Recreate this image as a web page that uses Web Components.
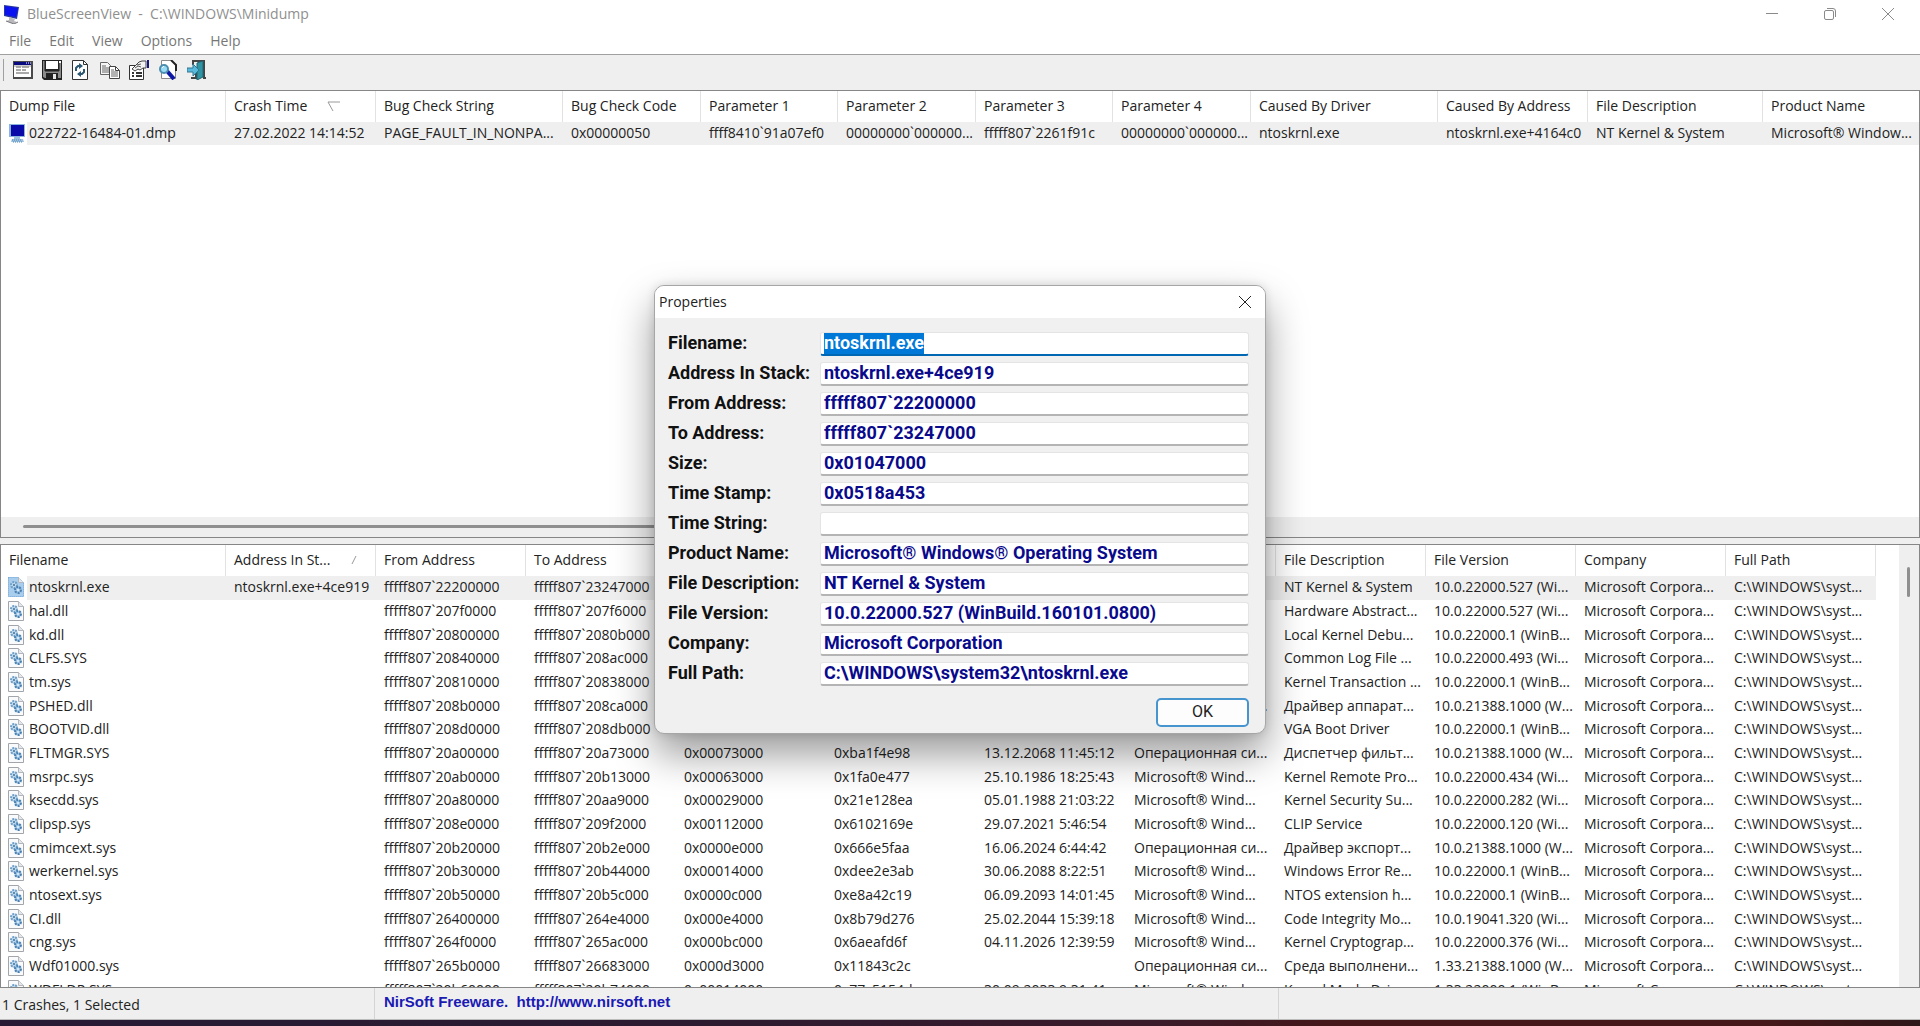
<!DOCTYPE html>
<html lang="en">
<head>
<meta charset="utf-8">
<title>BlueScreenView</title>
<style>
  body {
    margin: 0;
    font: 14px/20px "Open Sans", "Noto Sans", sans-serif;
    color: #222;
  }
</style>
</head>
<body>
<app-window></app-window>

<script>
const icons = {
  monitor: `<svg width="18" height="20" viewBox="0 0 18 20">
    <rect x="1" y="1" width="16" height="13" fill="#8ab4dc"/>
    <rect x="3" y="2" width="13" height="11" fill="#0a0aa8"/>
    <path d="M6 14h6v2h3l1 3H3l1-3h2z" fill="#9cc0de"/>
    <path d="M4 17h10M5 19h9" stroke="#4d86b8" stroke-dasharray="1 1"/>
  </svg>`,
  app: `<svg width="18" height="20" viewBox="0 0 18 20">
    <path d="M1 1l15 2-2 12-13-3z" fill="#2a3a9c"/>
    <path d="M2 2l13 2-2 9-11-2z" fill="#0b12f0"/>
    <path d="M6 13l6 2-1 2 3 1-3 2-8-3 3-1z" fill="#b9b9bd"/>
    <path d="M3 17l8 3 4-2" fill="none" stroke="#77777b"/>
  </svg>`,
  file: `<svg width="18" height="20" viewBox="0 0 18 20">
    <path d="M.5 .5h10l5 5v14H.5z" fill="#f8fafc" stroke="#a2a6ab"/>
    <path d="M10.500 .5v5h5" fill="#e4e8ec" stroke="#b4b8bc"/>
    <circle cx="6" cy="8" r="3" fill="#c2dcf0" stroke="#6f9ec6" stroke-width="2" stroke-dasharray="2 1"/>
    <circle cx="10" cy="13" r="3" fill="#9cc4e6" stroke="#4a80b0" stroke-width="2" stroke-dasharray="2 1"/>
    <circle cx="6" cy="8" r="1" fill="#3f709c"/>
    <circle cx="10" cy="13" r="1" fill="#e8f3fb"/>
  </svg>`,
  list: `<svg width="20" height="20" viewBox="0 0 20 20">
    <path d="M0 1h20v18H0z" fill="#4a4a4a"/><path d="M1 2h17v15H1z" fill="#fff"/>
    <path d="M1 2h17v3H1z" fill="#0a0a80"/><path d="M13 3h1m1 0h1m1 0h1" stroke="#fff"/>
    <path d="M3 7h5m1 0h7M3 10h5m1 0h4M3 13h13" stroke="#555"/>
    <path d="M1 6h17" stroke="#9a9a9a"/>
  </svg>`,
  save: `<svg width="20" height="20" viewBox="0 0 20 20">
    <path d="M0 0h20v20H2l-2-2z" fill="#222"/>
    <path d="M1 1h2v10h14V1h2v17H3l-2-1z" fill="#8c8c8c"/>
    <path d="M4 1h12v8H4z" fill="#fff"/>
    <path d="M3 1v10h14V1" fill="none" stroke="#222"/>
    <path d="M4 13h12v6H4z" fill="#222"/><path d="M11 14h3v5h-3z" fill="#e6e6e6"/>
    <path d="M17 1h2v2h-2z" fill="#fff"/>
  </svg>`,
  refresh: `<svg width="20" height="20" viewBox="0 0 20 20">
    <path d="M1.500 .5h11l4 4v15h-15z" fill="#fff" stroke="#333"/>
    <path d="M12.500 .5v4h4" fill="none" stroke="#333"/>
    <path d="M5 11V8l2-2h2M13 9v3l-2 2H9" fill="none" stroke="#2c5871" stroke-width="2"/>
    <path d="M8 3l4 3-4 3zM10 11l-4 3 4 3z" fill="#2c5871"/>
  </svg>`,
  copy: `<svg width="20" height="20" viewBox="0 0 20 20">
    <path d="M.5 2.500h7l3 3v9H.5z" fill="#f5f5f5" stroke="#666"/>
    <path d="M2 6h4M2 8h7M2 10h7M2 12h7" stroke="#666"/>
    <path d="M9.500 6.500h6l4 4v8h-10z" fill="#fff" stroke="#444"/>
    <path d="M15.500 6.500v4h4" fill="none" stroke="#444"/>
    <path d="M11 10h3M11 12h7M11 14h7M11 16h7" stroke="#666"/>
  </svg>`,
  properties: `<svg width="20" height="20" viewBox="0 0 20 20">
    <path d="M.5 5.500h14v14H.5z" fill="#fff" stroke="#333"/>
    <path d="M3 13h2m2 0h6M3 16h2m2 0h6" stroke="#333" stroke-width="2"/>
    <path d="M3 9l3-3 4-4 3-1h4v7h-3l-3 2-2-1-3 2z" fill="#f2f2f2" stroke="#444"/>
    <path d="M6 8l3-2 3 1M8 5l4-1" fill="none" stroke="#555"/>
    <path d="M18 0h2v8h-2z" fill="#15157c"/>
  </svg>`,
  find: `<svg width="20" height="20" viewBox="0 0 20 20">
    <path d="M3.500 .5h10l4 4v14h-14z" fill="#fff" stroke="#8a8a8a"/>
    <path d="M13 0l5 5v6" fill="none" stroke="#222" stroke-width="2"/>
    <path d="M9 11l7 8" stroke="#0c17a5" stroke-width="4"/>
    <circle cx="6" cy="9" r="4" fill="#9adcf6" stroke="#4a8dae" stroke-width="2"/>
    <path d="M4 8l2-2" stroke="#fff"/>
  </svg>`,
  exit: `<svg width="20" height="20" viewBox="0 0 20 20">
    <path d="M6 5V1h11v17h2" fill="none" stroke="#444" stroke-width="2"/>
    <path d="M4 18h5v-5" fill="none" stroke="#444" stroke-width="2"/>
    <path d="M10 3l6-2v16l-6 3z" fill="#2f95a5" stroke="#1f6472"/>
    <path d="M0 8h6V4l6 6-6 6v-4H0z" fill="#59b9dc" stroke="#2e7793"/>
  </svg>`,
  sortDown: `<svg width="14" height="12" viewBox="0 0 14 12"><path d="M13 2H1l5 9" fill="none" stroke="#999"/></svg>`,
  sortUp: `<svg width="8" height="10" viewBox="0 0 8 10"><path d="M2 9l4-8" stroke="#999"/></svg>`
};

const crashColumns = [
  ['Dump File', 225], ['Crash Time', 150, 'sortDown'], ['Bug Check String', 187],
  ['Bug Check Code', 138], ['Parameter 1', 137], ['Parameter 2', 138],
  ['Parameter 3', 137], ['Parameter 4', 138], ['Caused By Driver', 187],
  ['Caused By Address', 150], ['File Description', 175], ['Product Name']
];

const crashRows = [
  ['022722-16484-01.dmp', '27.02.2022 14:14:52', 'PAGE_FAULT_IN_NONPA...', '0x00000050',
    'ffff8410`91a07ef0', '00000000`000000...', 'fffff807`2261f91c', '00000000`000000...',
    'ntoskrnl.exe', 'ntoskrnl.exe+4164c0', 'NT Kernel & System', 'Microsoft® Window...']
];

const driverColumns = [
  ['Filename', 225], ['Address In St...', 150, 'sortUp'], ['From Address', 150],
  ['To Address', 150], ['Size', 150], ['Time Stamp', 150], ['Time String', 150],
  ['Product Name', 150], ['File Description', 150], ['File Version', 150],
  ['Company', 150], ['Full Path', 150]
];

const ms = 'Microsoft® Wind...';
const os = 'Операционная си...';
const company = 'Microsoft Corpora...';
const path = 'C:\\WINDOWS\\syst...';

const driverRows = [
  ['ntoskrnl.exe', 'ntoskrnl.exe+4ce919', '22200000', '23247000', '', '', '', '', 'NT Kernel & System', '10.0.22000.527 (Wi...'],
  ['hal.dll', '', '207f0000', '207f6000', '', '', '', '', 'Hardware Abstract...', '10.0.22000.527 (Wi...'],
  ['kd.dll', '', '20800000', '2080b000', '', '', '', '', 'Local Kernel Debu...', '10.0.22000.1 (WinB...'],
  ['CLFS.SYS', '', '20840000', '208ac000', '', '', '', '', 'Common Log File ...', '10.0.22000.493 (Wi...'],
  ['tm.sys', '', '20810000', '20838000', '', '', '', '', 'Kernel Transaction ...', '10.0.22000.1 (WinB...'],
  ['PSHED.dll', '', '208b0000', '208ca000', '', '', '', os, 'Драйвер аппарат...', '10.0.21388.1000 (W...'],
  ['BOOTVID.dll', '', '208d0000', '208db000', '0x0000b000', '0x1a8b8d18', '08.06.2088 6:38:28', ms, 'VGA Boot Driver', '10.0.22000.1 (WinB...'],
  ['FLTMGR.SYS', '', '20a00000', '20a73000', '0x00073000', '0xba1f4e98', '13.12.2068 11:45:12', os, 'Диспетчер фильт...', '10.0.21388.1000 (W...'],
  ['msrpc.sys', '', '20ab0000', '20b13000', '0x00063000', '0x1fa0e477', '25.10.1986 18:25:43', ms, 'Kernel Remote Pro...', '10.0.22000.434 (Wi...'],
  ['ksecdd.sys', '', '20a80000', '20aa9000', '0x00029000', '0x21e128ea', '05.01.1988 21:03:22', ms, 'Kernel Security Su...', '10.0.22000.282 (Wi...'],
  ['clipsp.sys', '', '208e0000', '209f2000', '0x00112000', '0x6102169e', '29.07.2021 5:46:54', ms, 'CLIP Service', '10.0.22000.120 (Wi...'],
  ['cmimcext.sys', '', '20b20000', '20b2e000', '0x0000e000', '0x666e5faa', '16.06.2024 6:44:42', os, 'Драйвер экспорт...', '10.0.21388.1000 (W...'],
  ['werkernel.sys', '', '20b30000', '20b44000', '0x00014000', '0xdee2e3ab', '30.06.2088 8:22:51', ms, 'Windows Error Re...', '10.0.22000.1 (WinB...'],
  ['ntosext.sys', '', '20b50000', '20b5c000', '0x0000c000', '0xe8a42c19', '06.09.2093 14:01:45', ms, 'NTOS extension h...', '10.0.22000.1 (WinB...'],
  ['CI.dll', '', '26400000', '264e4000', '0x000e4000', '0x8b79d276', '25.02.2044 15:39:18', ms, 'Code Integrity Mo...', '10.0.19041.320 (Wi...'],
  ['cng.sys', '', '264f0000', '265ac000', '0x000bc000', '0x6aeafd6f', '04.11.2026 12:39:59', ms, 'Kernel Cryptograp...', '10.0.22000.376 (Wi...'],
  ['Wdf01000.sys', '', '265b0000', '26683000', '0x000d3000', '0x11843c2c', '', os, 'Среда выполнени...', '1.33.21388.1000 (W...'],
  ['WDFLDR.SYS', '', '20b60000', '20b74000', '0x00014000', '0x77c5154d', '30.09.2033 9:31:41', ms, 'Kernel Mode Dri...', '1.33.22000.1 (WinB...']
].map(row => row
  .map((cell, i) => (i === 2 || i === 3 ? `fffff807\`${cell}` : cell))
  .concat(company, path));

const properties = [
  ['Filename', 'ntoskrnl.exe'],
  ['Address In Stack', 'ntoskrnl.exe+4ce919'],
  ['From Address', 'fffff807`22200000'],
  ['To Address', 'fffff807`23247000'],
  ['Size', '0x01047000'],
  ['Time Stamp', '0x0518a453'],
  ['Time String', ''],
  ['Product Name', 'Microsoft® Windows® Operating System'],
  ['File Description', 'NT Kernel & System'],
  ['File Version', '10.0.22000.527 (WinBuild.160101.0800)'],
  ['Company', 'Microsoft Corporation'],
  ['Full Path', 'C:\\WINDOWS\\system32\\ntoskrnl.exe']
];

const escapeText = text => text.replace(/&/g, '&amp;');

class TitleBar extends HTMLElement {

  constructor() {
    super();
    this.attachShadow({mode: 'open'}).innerHTML = `
      <style>
        :host {
          display: flex;
          align-items: center;
          height: 28px;
          padding-left: 3px;
          background: #fff;
          color: #8f8f8f;
        }
        h1 {
          flex: 1;
          margin: 0 0 0 6px;
          font-size: 14px;
          font-weight: normal;
          white-space: pre;
        }
        button {
          width: 58px;
          height: 28px;
          padding: 0;
          border: 0;
          background: none;
        }
        button svg {
          display: block;
          margin: auto;
          fill: none;
          stroke: #8a8a8a;
        }
        button:last-child {
          margin-right: 3px;
        }
      </style>
      ${icons.app}
      <h1><slot></slot></h1>
      <button aria-label="Minimize"><svg width="14" height="14"><path d="M1 6.500h12"/></svg></button>
      <button aria-label="Restore"><svg width="14" height="14"><path d="M3 3.500h6q1.500 0 1.500 1.500v6q0 1.500-1.500 1.500H3q-1.500 0-1.500-1.500V5q0-1.500 1.500-1.500zM4 1.500h6q2.500 0 2.500 2.500v6"/></svg></button>
      <button aria-label="Close"><svg width="14" height="14"><path d="M1 1l12 12M13 1L1 13"/></svg></button>
    `;
  }
}

class MenuBar extends HTMLElement {

  constructor() {
    super();
    this.attachShadow({mode: 'open'}).innerHTML = `
      <style>
        :host {
          display: flex;
          height: 26px;
          background: #fff;
        }
        button {
          padding: 0 9px;
          border: 0;
          background: none;
          color: #777;
          font: inherit;
        }
      </style>
      ${['File', 'Edit', 'View', 'Options', 'Help'].map(name => `<button>${name}</button>`).join('')}
    `;
  }
}

class ToolBar extends HTMLElement {

  constructor() {
    super();
    const buttons = [
      ['list', 'Advanced Options'], ['save', 'Save Selected Items'], ['refresh', 'Refresh'],
      ['copy', 'Copy Selected Items'], ['properties', 'Properties'], ['find', 'Find'], ['exit', 'Exit']
    ];
    this.attachShadow({mode: 'open'}).innerHTML = `
      <style>
        :host {
          display: flex;
          align-items: center;
          box-sizing: border-box;
          height: 36px;
          padding: 0 3px 5px;
          border-top: 1px solid #a0a0a0;
          background: #efefef;
        }
        .grip {
          width: 1px;
          height: 22px;
          margin-right: 4px;
          background: #a0a0a0;
        }
        button {
          display: grid;
          place-items: center;
          width: 29px;
          height: 24px;
          padding: 0;
          border: 0;
          background: none;
        }
      </style>
      <span class="grip"></span>
      ${buttons.map(([icon, label]) => `<button aria-label="${label}">${icons[icon]}</button>`).join('')}
    `;
  }
}

class ListPane extends HTMLElement {

  constructor() {
    super();
    this.shadowDOM = this.attachShadow({mode: 'open'});
  }

  set data(data) {
    this._data = data;
    this.render();
  }

  renderHead([name, , sort]) {
    return `<th scope="col"><span>${name}${sort ? icons[sort] : ''}</span></th>`;
  }

  renderRow(row, icon) {
    return `<tr>${row.map((cell, i) => i === 0
      ? `<td><div>${icon}<span>${cell}</span></div></td>`
      : `<td>${escapeText(cell)}</td>`).join('')}</tr>`;
  }

  render() {
    const {columns, rows, icon} = this._data;
    this.shadowDOM.innerHTML = `
      <style>
        :host {
          display: flex;
          flex-direction: var(--pane-direction, row);
          min-height: 0;
          box-sizing: border-box;
          border: 1px solid #868686;
          background: #fff;
        }
        .view {
          flex: 1;
          min-width: 0;
          min-height: 0;
          overflow: hidden;
        }
        table {
          width: var(--table-width, 100%);
          height: var(--table-height, auto);
          table-layout: fixed;
          border-spacing: 0;
        }
        th, td {
          padding: 0 0 0 8px;
          overflow: hidden;
          text-align: left;
          white-space: nowrap;
        }
        th {
          height: 31px;
          padding-bottom: 2px;
          box-sizing: border-box;
          border-right: 1px solid #e2e2e2;
          font-weight: normal;
        }
        th:last-child {
          border-right-color: var(--last-line, #e2e2e2);
        }
        th span {
          display: flex;
          align-items: center;
        }
        th svg {
          margin-left: 20px;
        }
        td {
          padding-bottom: 1px;
          height: 22px;
        }
        td div {
          display: flex;
          align-items: center;
          gap: 3px;
          margin-left: -1px;
          height: 22px;
        }
        td span {
          flex: 1;
        }
        tbody tr:first-child {
          background: #efefef;
        }
        tbody tr:first-child td:first-child {
          background: linear-gradient(90deg, #fff 26px, #efefef 26px);
        }
        tbody tr:first-child path:first-child {
          fill: #a9cdec;
          stroke: #4b8fce;
          stroke-dasharray: 1 1;
        }
      </style>
      <div class="view">
        <table>
          <colgroup>${columns.map(([, width]) => `<col${width ? ` style="width: ${width}px"` : ''}>`).join('')}</colgroup>
          <thead><tr>${columns.map(this.renderHead).join('')}</tr></thead>
          <tbody>${rows.map(row => this.renderRow(row, icons[icon])).join('')}</tbody>
        </table>
      </div>
      <slot></slot>
    `;
  }
}

class ScrollTrack extends HTMLElement {

  constructor() {
    super();
    this.attachShadow({mode: 'open'}).innerHTML = `
      <style>
        :host {
          display: block;
          box-sizing: border-box;
          height: 20px;
          padding: 8px 22px;
          background: #efefef;
        }
        div {
          width: 62%;
          height: 3px;
          border-radius: 2px;
          background: #8f8f8f;
        }
        :host([vertical]) {
          width: 20px;
          height: auto;
          padding: 22px 8px;
        }
        :host([vertical]) div {
          width: 3px;
          height: 30px;
        }
      </style>
      <div></div>
    `;
  }
}

class StatusBar extends HTMLElement {

  constructor() {
    super();
    this.attachShadow({mode: 'open'}).innerHTML = `
      <style>
        :host {
          display: grid;
          grid-template-columns: 375px 904px 1fr;
          height: 32px;
          box-sizing: border-box;
          border-bottom: 1px solid #bbb;
          background: #efefef;
        }
        div {
          padding: 7px 2px 0;
          border-right: 1px solid #d4d4d4;
        }
        .credit {
          padding: 4px 9px 0;
        }
        div:last-child {
          border: 0;
        }
        a {
          color: #1a1ab4;
          font: bold 15px/20px "Liberation Sans", sans-serif;
          text-decoration: none;
          white-space: pre;
        }
      </style>
      <div>1 Crashes, 1 Selected</div>
      <div class="credit"><a href="http://www.nirsoft.net">NirSoft Freeware.  http://www.nirsoft.net</a></div>
      <div></div>
    `;
  }
}

class PropertiesDialog extends HTMLElement {

  constructor() {
    super();
    this.shadowDOM = this.attachShadow({mode: 'open'});
    this.shadowDOM.innerHTML = `
      <style>
        :host {
          position: absolute;
          inset: 0;
          display: grid;
          place-items: center;
          padding-bottom: 2px;
        }
        section {
          width: 612px;
          box-sizing: border-box;
          border: 1px solid #a6a6a6;
          border-radius: 10px;
          overflow: hidden;
          background: #f0f0f0;
          box-shadow: 0 20px 40px rgba(0, 0, 0, 0.4), 0 0 10px rgba(0, 0, 0, 0.12);
        }
        header {
          display: flex;
          align-items: center;
          justify-content: space-between;
          height: 32px;
          padding: 0 13px 0 4px;
          background: #fff;
        }
        h2 {
          margin: 0;
          font-size: 14px;
          font-weight: normal;
        }
        header button {
          padding: 0;
          border: 0;
          background: none;
          line-height: 0;
        }
        form {
          display: grid;
          grid-template-columns: 152px 1fr;
          grid-auto-rows: 24px;
          gap: 6px 0;
          padding: 14px 16px 12px 13px;
        }
        label, input {
          font: bold 18px/22px Roboto, sans-serif;
        }
        label {
          color: #111;
          white-space: nowrap;
        }
        input {
          min-width: 0;
          padding: 0 3px;
          border: 1px solid #e4e4e4;
          border-bottom: 2px solid #b4b4b4;
          border-radius: 3px;
          outline: 0;
          background: #fff;
          color: #0a0a8c;
        }
        input:first-of-type {
          border-bottom-color: #0067b4;
        }
        input::selection {
          background: #0078d7;
          color: #fff;
        }
        footer {
          display: flex;
          justify-content: flex-end;
          padding: 0 16px 6px;
        }
        .ok {
          width: 93px;
          height: 29px;
          border: 2px solid #4795cf;
          border-radius: 5px;
          background: #fdfdfd;
          color: #222;
          font: 16px/20px Roboto, sans-serif;
        }
      </style>
      <section role="dialog" aria-labelledby="title">
        <header>
          <h2 id="title">Properties</h2>
          <button aria-label="Close"><svg width="14" height="14"><path d="M1 1l12 12M13 1L1 13" stroke="#222"/></svg></button>
        </header>
        <form>
          ${properties.map(([name, value], i) => `
            <label for="field${i}">${name}:</label>
            <input id="field${i}" value="${escapeText(value)}" readonly>`).join('')}
        </form>
        <footer><button class="ok">OK</button></footer>
      </section>
    `;
  }

  connectedCallback() {
    const first = this.shadowDOM.querySelector('input');
    first.focus();
    first.select();
  }
}

class AppWindow extends HTMLElement {

  constructor() {
    super();
    this.shadowDOM = this.attachShadow({mode: 'open'});
    this.shadowDOM.innerHTML = `
      <style>
        :host {
          display: flex;
          flex-direction: column;
          height: 100vh;
        }
        main {
          position: relative;
          flex: 1;
          display: flex;
          flex-direction: column;
          min-height: 0;
          overflow: hidden;
          background: #efefef;
        }
        .panes {
          flex: 1;
          display: grid;
          grid-template-rows: 112fr 6px 111fr;
          min-height: 0;
        }
        #crashes {
          --pane-direction: column;
          --last-line: transparent;
          grid-row: 1;
        }
        /* 31px header and 18 rows */
        #drivers {
          --table-width: 1875px;
          --table-height: 457px;
          grid-row: 3;
        }
        .desktop {
          height: 6px;
          background: linear-gradient(90deg, #271a35, #2b1a30 35%, #3a1b2a 60%, #451719 70%, #451719 92%, #2e1719);
        }
      </style>
      <main>
        <title-bar>BlueScreenView  -  C:\\WINDOWS\\Minidump</title-bar>
        <menu-bar></menu-bar>
        <tool-bar></tool-bar>
        <div class="panes">
          <list-pane id="crashes"><scroll-track></scroll-track></list-pane>
          <list-pane id="drivers"><scroll-track vertical></scroll-track></list-pane>
        </div>
        <status-bar></status-bar>
        <properties-dialog></properties-dialog>
      </main>
      <div class="desktop"></div>
    `;
  }

  connectedCallback() {
    this.shadowDOM.querySelector('#crashes').data = {columns: crashColumns, rows: crashRows, icon: 'monitor'};
    this.shadowDOM.querySelector('#drivers').data = {columns: driverColumns, rows: driverRows, icon: 'file'};
  }
}

customElements.define('title-bar', TitleBar);
customElements.define('menu-bar', MenuBar);
customElements.define('tool-bar', ToolBar);
customElements.define('scroll-track', ScrollTrack);
customElements.define('list-pane', ListPane);
customElements.define('status-bar', StatusBar);
customElements.define('properties-dialog', PropertiesDialog);
customElements.define('app-window', AppWindow);
</script>
</body>
</html>
